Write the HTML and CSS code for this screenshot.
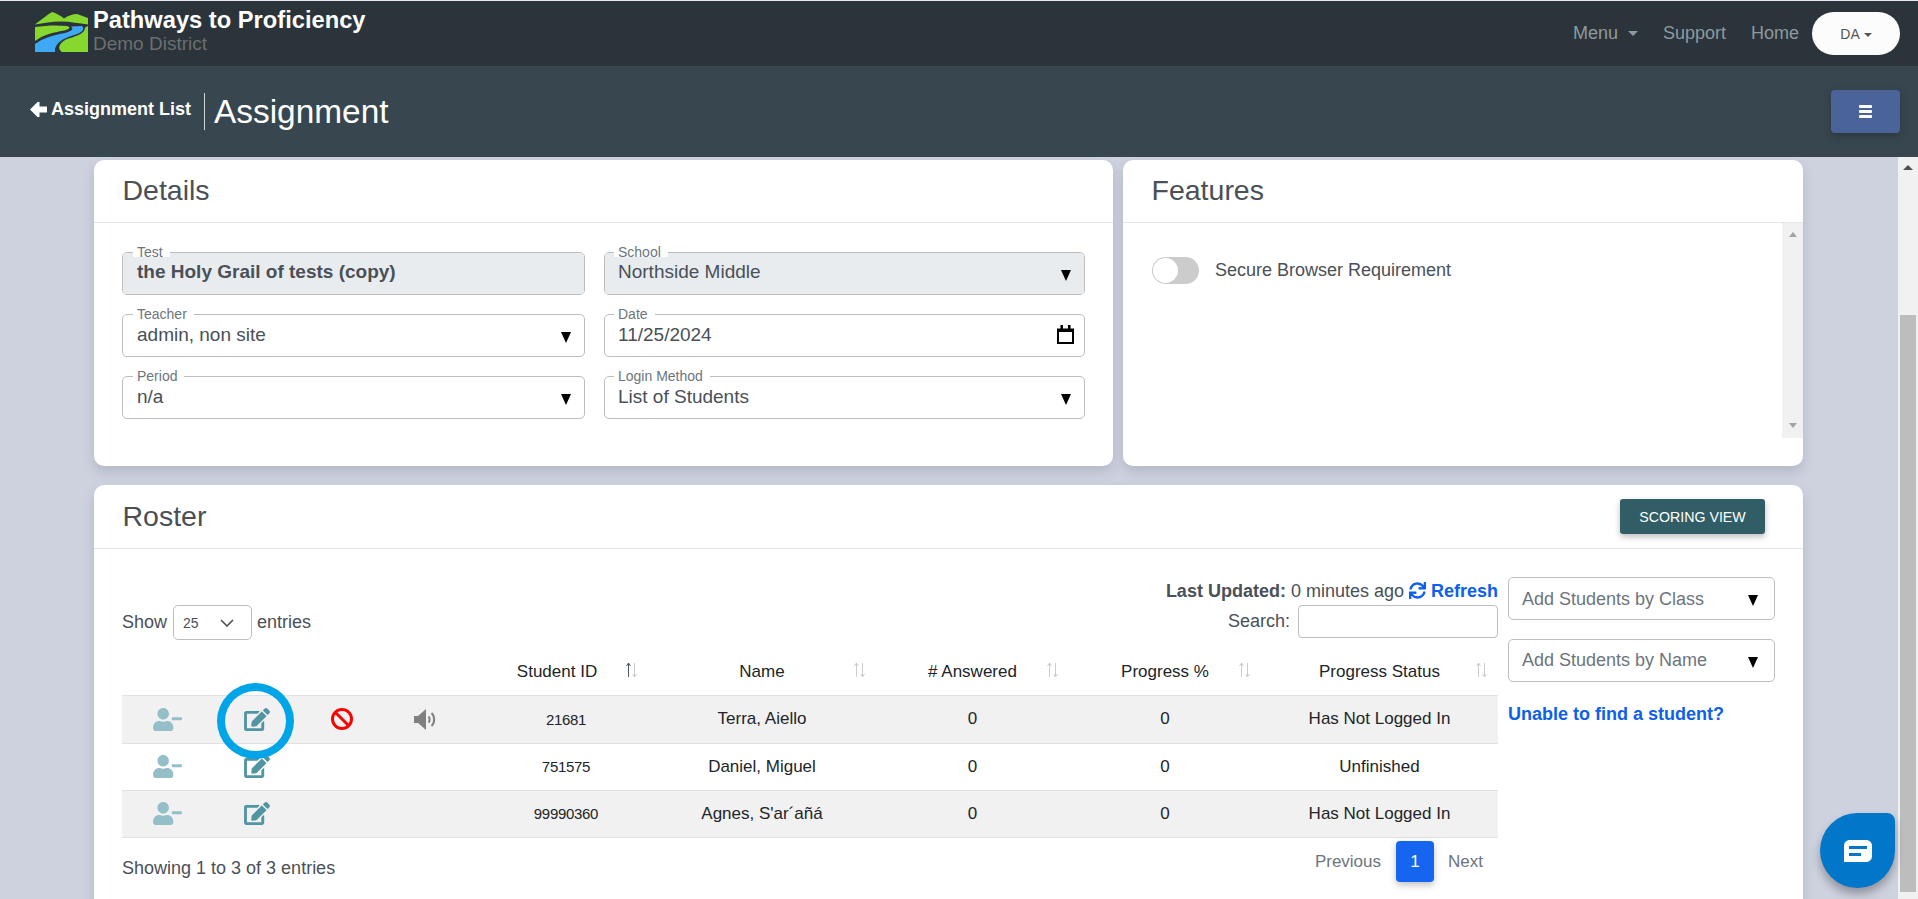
FILE: index.html
```html
<!DOCTYPE html>
<html lang="en">
<head>
<meta charset="utf-8">
<title>Assignment</title>
<link rel="stylesheet" href="styles.css">
</head>
<body>
<svg class="sprite" aria-hidden="true">
  <symbol id="i-edit" viewBox="0 0 576 512"><path d="M402.6 83.2l90.2 90.2c3.8 3.8 3.8 10 0 13.8L274.4 405.6l-92.8 10.3c-12.4 1.4-22.9-9.1-21.5-21.5l10.3-92.8L388.8 83.2c3.8-3.8 10-3.8 13.8 0zm162-22.9l-48.8-48.8c-15.2-15.2-39.9-15.2-55.2 0l-35.4 35.4c-3.8 3.8-3.8 10 0 13.8l90.2 90.2c3.8 3.8 10 3.8 13.8 0l35.4-35.4c15.2-15.3 15.2-40 0-55.2zM384 346.2V448H64V128h229.8c3.2 0 6.2-1.3 8.5-3.5l40-40c7.6-7.6 2.2-20.5-8.5-20.5H48C21.5 64 0 85.5 0 112v352c0 26.5 21.5 48 48 48h352c26.5 0 48-21.5 48-48V306.2c0-10.7-12.9-16-20.5-8.5l-40 40c-2.2 2.3-3.5 5.3-3.5 8.5z"/></symbol>
  <symbol id="i-user" viewBox="0 0 640 512"><path d="M624 208H432c-8.8 0-16 7.2-16 16v32c0 8.8 7.2 16 16 16h192c8.8 0 16-7.2 16-16v-32c0-8.8-7.2-16-16-16zm-400 48c70.7 0 128-57.3 128-128S294.7 0 224 0 96 57.3 96 128s57.3 128 128 128zm89.6 32h-16.7c-22.2 10.2-46.9 16-72.9 16s-50.6-5.8-72.9-16h-16.7C60.2 288 0 348.2 0 422.4V464c0 26.5 21.5 48 48 48h352c26.5 0 48-21.5 48-48v-41.6c0-74.2-60.2-134.4-134.4-134.4z"/></symbol>
  <symbol id="i-sort" viewBox="0 0 13 16"><path class="sort-up" d="M3.5 15V1M1.5 4L3.5 1L5.5 4"/><path class="sort-down" d="M9.5 1V15M7.5 12L9.5 15L11.5 12"/></symbol>
</svg>

<header class="topbar">
  <div class="brand">
    <svg class="logo" viewBox="0 0 53 40" aria-hidden="true">
      <path class="logo-green" d="M0 12.5C6 8 12 3 17 0C21 1 26 4 29 6.500C33 3.500 38 2 42 2L53 6V12.500C44 11.500 36 9.500 26 9.500C17 9.500 8 11 0 12.500Z"/>
      <path class="logo-green" d="M0 15C10 13.500 22 13 32 14C36 15 35 17 29 18.500C18 20.500 8 23 0 29Z"/>
      <path class="logo-green" d="M53 14V40H27C22 37 24 31 31 27.500C38 24.500 50 23 50 15.500Z"/>
      <path class="logo-blue" d="M0 40V32C8 26 19 23 30 21C37 19 39 17 36 14.500L47 14C50 17 48 20.500 39 23C29 26 19 31 20 40Z"/>
    </svg>
    <div class="brand-text">
      <div class="brand-name">Pathways to Proficiency</div>
      <div class="brand-sub">Demo District</div>
    </div>
  </div>
  <nav class="topnav">
    <a class="nav-link nav-menu">Menu<span class="caret caret-nav"></span></a>
    <a class="nav-link">Support</a>
    <a class="nav-link">Home</a>
    <button class="user-btn">DA<span class="caret caret-user"></span></button>
  </nav>
</header>

<section class="subbar">
  <a class="back-link">
    <svg class="back-arrow" viewBox="0 0 17 15" aria-hidden="true"><path d="M0 7.500L7.500 0H9.500V4.500H17V10.500H9.500V15H7.500Z"/></svg>
    Assignment List
  </a>
  <h1 class="page-title">Assignment</h1>
  <button class="hamburger" aria-label="Menu">
    <span class="hamburger-bar"></span><span class="hamburger-bar"></span><span class="hamburger-bar"></span>
  </button>
</section>

<div class="content">
  <main class="main">
    <section class="card">
      <h2 class="card-head">Details</h2>
      <div class="details-grid">
        <div class="field field-disabled"><span class="field-label">Test</span><span class="field-value value-bold">the Holy Grail of tests (copy)</span></div>
        <div class="field field-disabled"><span class="field-label">School</span><span class="field-value">Northside Middle</span><span class="drop"></span></div>
        <div class="field"><span class="field-label">Teacher</span><span class="field-value">admin, non site</span><span class="drop"></span></div>
        <div class="field"><span class="field-label">Date</span><span class="field-value">11/25/2024</span>
          <svg class="calendar" viewBox="0 0 17 19" aria-hidden="true"><path d="M1 4.500H16V18H1Z M1 5.500H16" fill="none" stroke="#000" stroke-width="2"/><path d="M3.500 0H6V4H3.500ZM11 0H13.500V4H11Z M1 4H16V7H1Z"/></svg>
        </div>
        <div class="field"><span class="field-label">Period</span><span class="field-value">n/a</span><span class="drop"></span></div>
        <div class="field"><span class="field-label">Login Method</span><span class="field-value">List of Students</span><span class="drop"></span></div>
      </div>
    </section>

    <section class="card">
      <h2 class="card-head">Features</h2>
      <div class="features-body">
        <div class="features-list">
          <span class="toggle"><span class="toggle-knob"></span></span>
          <span class="toggle-text">Secure Browser Requirement</span>
        </div>
        <div class="inner-scroll"><span class="tri-up"></span><span class="tri-down"></span></div>
      </div>
    </section>

    <section class="card roster">
      <div class="card-head roster-head">
        <h2 class="roster-title">Roster</h2>
        <button class="scoring-btn">SCORING VIEW</button>
      </div>
      <div class="roster-body">
        <div class="roster-left">
          <div class="updated"><b>Last Updated:</b> 0 minutes ago
            <a class="refresh"><svg class="refresh-icon" viewBox="0 0 512 512" aria-hidden="true"><path d="M440.65 12.57l4 82.77A247.16 247.16 0 0 0 255.83 8C134.73 8 33.91 94.92 12.29 209.82A12 12 0 0 0 24.09 224h49.05a12 12 0 0 0 11.67-9.26 175.91 175.91 0 0 1 317-56.94l-101.46-4.86a12 12 0 0 0-12.57 12v47.41a12 12 0 0 0 12 12H500a12 12 0 0 0 12-12V12a12 12 0 0 0-12-12h-47.37a12 12 0 0 0-11.98 12.57zM255.83 432a175.61 175.61 0 0 1-146-77.8l101.8 4.87a12 12 0 0 0 12.57-12v-47.4a12 12 0 0 0-12-12H12a12 12 0 0 0-12 12V500a12 12 0 0 0 12 12h47.35a12 12 0 0 0 12-12.6l-4.15-82.57A247.17 247.17 0 0 0 255.83 504c121.11 0 221.93-86.92 243.55-201.82a12 12 0 0 0-11.8-14.18h-49.05a12 12 0 0 0-11.67 9.26A175.86 175.86 0 0 1 255.83 432z"/></svg> Refresh</a>
          </div>
          <div class="tools">
            <div class="show">Show
              <span class="show-select">25<svg class="chevron" viewBox="0 0 14 8" aria-hidden="true"><path d="M1 1L7 7L13 1"/></svg></span>
              entries
            </div>
            <div class="search">Search:<span class="search-input"></span></div>
          </div>
          <table class="roster-table">
            <colgroup>
              <col class="c-user"><col class="c-edit"><col class="c-ban"><col class="c-vol">
              <col class="c-id"><col class="c-name"><col class="c-ans"><col class="c-pct"><col class="c-status">
            </colgroup>
            <thead>
              <tr>
                <th></th><th></th><th></th><th></th>
                <th class="th-id">Student ID<svg class="sort sort-active"><use href="#i-sort"/></svg></th>
                <th>Name<svg class="sort"><use href="#i-sort"/></svg></th>
                <th># Answered<svg class="sort"><use href="#i-sort"/></svg></th>
                <th>Progress %<svg class="sort"><use href="#i-sort"/></svg></th>
                <th>Progress Status<svg class="sort"><use href="#i-sort"/></svg></th>
              </tr>
            </thead>
            <tbody>
              <tr class="row-odd">
                <td><svg class="ico-user"><use href="#i-user"/></svg></td>
                <td><svg class="ico-edit"><use href="#i-edit"/></svg></td>
                <td><svg class="ico-ban" viewBox="0 0 22 22" aria-hidden="true"><circle cx="11" cy="11" r="9.500"/><path d="M4.500 4.500L17.500 17.500"/></svg></td>
                <td class="td-vol"><svg class="ico-vol" viewBox="0 0 22 21" aria-hidden="true"><path class="vol-cone" d="M0 7H4L12 0V21L4 14H0Z"/><path class="vol-wave" d="M14.500 7.500C16 9 16 12 14.500 13.500M17.500 4C21 7 21 14 17.500 17"/></svg></td>
                <td class="td-id">21681</td><td>Terra, Aiello</td><td>0</td><td>0</td><td>Has Not Logged In</td>
              </tr>
              <tr>
                <td><svg class="ico-user"><use href="#i-user"/></svg></td>
                <td><svg class="ico-edit"><use href="#i-edit"/></svg></td>
                <td></td><td></td>
                <td class="td-id">751575</td><td>Daniel, Miguel</td><td>0</td><td>0</td><td>Unfinished</td>
              </tr>
              <tr class="row-odd">
                <td><svg class="ico-user"><use href="#i-user"/></svg></td>
                <td><svg class="ico-edit"><use href="#i-edit"/></svg></td>
                <td></td><td></td>
                <td class="td-id">99990360</td><td>Agnes, S'ar´añá</td><td>0</td><td>0</td><td>Has Not Logged In</td>
              </tr>
            </tbody>
          </table>
          <div class="table-foot">
            <div class="showing">Showing 1 to 3 of 3 entries</div>
            <div class="pager"><a class="page-link">Previous</a><a class="page-current">1</a><a class="page-link">Next</a></div>
          </div>
        </div>
        <aside class="roster-right">
          <div class="add-select"><span class="add-text">Add Students by Class</span><span class="drop"></span></div>
          <div class="add-select"><span class="add-text">Add Students by Name</span><span class="drop"></span></div>
          <a class="unable">Unable to find a student?</a>
        </aside>
      </div>
    </section>
  </main>
  <div class="page-scroll"><span class="page-scroll-up"></span><span class="page-scroll-thumb"></span></div>
</div>

<div class="highlight-circle"></div>
<button class="chat-btn" aria-label="Chat">
  <svg class="chat-icon" viewBox="0 0 28 22" aria-hidden="true"><path d="M6 0H22C25.500 0 28 2.500 28 6V16C28 19.500 25.500 22 22 22H0V6C0 2.500 2.500 0 6 0Z" fill="#fff"/><path d="M5 7.500H23M5 14.500H17" stroke="#0277c9" stroke-width="3"/></svg>
</button>
</body>
</html>
```

FILE: styles.css
```css
* { box-sizing: border-box; }
html, body { margin: 0; height: 100%; }
body {
  position: relative;
  height: 899px;
  overflow: hidden;
  display: flex;
  flex-direction: column;
  background: #ced2df;
  color: #495057;
  font-family: "Liberation Sans", Arial, sans-serif;
  font-size: 18px;
}
.sprite { display: none; }
button { font-family: inherit; border: 0; padding: 0; }

/* top bar */
.topbar {
  flex: none;
  height: 66px;
  border-top: 1px solid #e8e6ee;
  background: #2a343a;
  display: flex;
  align-items: center;
  justify-content: space-between;
  padding: 0 18px 0 35px;
}
.brand { display: flex; align-items: flex-start; gap: 5px; margin-top: -1px; }
.logo { width: 53px; height: 40px; }
.logo-green { fill: #86d72e; }
.logo-blue { fill: #3fa9f5; }
.brand-text { margin-top: -5px; }
.brand-name { color: #fff; font-weight: 700; font-size: 23.700px; line-height: 26px; }
.brand-sub { color: #6e6e6e; font-size: 19px; line-height: 22px; }
.topnav { display: flex; align-items: center; }
.nav-link { color: #8d9a9f; font-size: 18px; margin-right: 25px; }
.nav-menu { display: flex; align-items: center; }
.nav-link:nth-child(3) { margin-right: 13px; }
.caret {
  display: inline-block;
  width: 0;
  height: 0;
  border-left: 5px solid transparent;
  border-right: 5px solid transparent;
  border-top: 5px solid #8d9a9f;
}
.caret-nav { margin-left: 10px; }
.caret-user { margin-left: 4px; border-left-width: 4px; border-right-width: 4px; border-top: 4px solid #555; vertical-align: 2px; }
.user-btn {
  width: 88px;
  height: 43px;
  border-radius: 22px;
  background: #fcfcfc;
  color: #555;
  font-size: 14px;
}

/* sub bar */
.subbar {
  flex: none;
  height: 91px;
  background: #38474f;
  display: flex;
  align-items: center;
  padding: 0 18px 0 30px;
  color: #fff;
}
.back-link {
  display: flex;
  align-items: center;
  gap: 4px;
  font-weight: 700;
  font-size: 18px;
  padding-right: 13px;
  margin-bottom: 6px;
  margin-top: 1px;
}
.back-arrow { width: 17px; height: 15px; fill: #fff; }
.page-title {
  margin: 0;
  font-size: 33.400px;
  font-weight: 400;
  line-height: 37px;
  border-left: 1px solid #cfd4d8;
  padding-left: 9px;
  flex: 1;
}
.hamburger {
  width: 69px;
  height: 43px;
  border-radius: 4px;
  background: #4a6398;
  box-shadow: 0 3px 8px rgba(0, 0, 0, .25);
  display: flex;
  flex-direction: column;
  align-items: center;
  justify-content: center;
  gap: 2px;
}
.hamburger-bar { width: 13px; height: 3px; background: #fff; border-radius: 1px; }

/* layout */
.content { flex: 1; min-height: 0; display: flex; }
.main {
  flex: 1;
  min-width: 0;
  overflow: hidden;
  display: grid;
  grid-template-columns: 1019px 680px;
  grid-template-rows: 306px 500px;
  gap: 19px 10px;
  padding: 3px 0 0 94px;
}
.page-scroll {
  flex: none;
  width: 20px;
  background: #f1f1f1;
  display: flex;
  flex-direction: column;
  align-items: center;
  padding-top: 8px;
}
.page-scroll-up {
  width: 0;
  height: 0;
  border-left: 5px solid transparent;
  border-right: 5px solid transparent;
  border-bottom: 5px solid #505050;
  margin-bottom: 145px;
}
.page-scroll-thumb { width: 16px; height: 577px; background: #bdbdbd; }

/* cards */
.card {
  background: #fff;
  border-radius: 10px;
  box-shadow: 0 6px 12px rgba(60, 70, 100, .18);
}
.card-head {
  margin: 0;
  height: 63px;
  padding-left: 28.500px;
  border-bottom: 1px solid #e3e6ea;
  font-size: 28.500px;
  font-weight: 400;
  line-height: 61px;
  color: #495057;
}
.details-grid {
  display: grid;
  grid-template-columns: 463px 481px;
  grid-auto-rows: 43px;
  gap: 19px;
  padding: 29px 0 0 28px;
}
.field {
  position: relative;
  display: flex;
  align-items: center;
  border: 1px solid #bdbdbd;
  border-radius: 5px;
  padding: 0 13px;
}
.field:nth-child(odd) { padding-left: 14px; }
.field-disabled { background: #fff; }
.field-disabled::after {
  content: "";
  position: absolute;
  inset: 4px 0 0;
  border-radius: 0 0 4px 4px;
  background: #e9ecef;
}
.field-disabled::before {
  content: "";
  position: absolute;
  inset: 0;
  border-radius: 4px;
  background: #e9ecef;
}
.field-label {
  position: absolute;
  top: -7px;
  left: 9px;
  padding: 0 7px 0 4px;
  background: #fff;
  color: #6c757d;
  font-size: 14px;
  line-height: 12px;
  height: 12px;
}
.field:nth-child(odd) .field-label { left: 10px; }
.field-value { position: relative; z-index: 1; flex: 1; margin-top: -2px; color: #495057; font-size: 19px; }
.field-disabled .field-value { margin-top: -3px; }
.value-bold { font-weight: 700; }
.drop {
  position: relative;
  z-index: 1;
  flex: none;
  width: 0;
  height: 0;
  margin-top: 3px;
  border-left: 5.500px solid transparent;
  border-right: 5.500px solid transparent;
  border-top: 11px solid #000;
}
.calendar { flex: none; width: 17px; height: 19px; margin-right: -3px; margin-top: -2px; }

/* features */
.features-body { display: flex; height: 215px; }
.features-list { flex: 1; display: flex; align-items: flex-start; gap: 16px; padding: 34px 0 0 29px; }
.toggle {
  width: 47px;
  height: 27px;
  border-radius: 14px;
  background: #ccc;
  display: flex;
  align-items: center;
  padding-left: 1px;
}
.toggle-knob { width: 25px; height: 25px; border-radius: 50%; background: #fff; }
.toggle-text { line-height: 27px; color: #495057; }
.inner-scroll {
  width: 21px;
  background: #f1f1f1;
  display: flex;
  flex-direction: column;
  align-items: center;
  justify-content: space-between;
  padding: 9px 0 10px;
}
.tri-up, .tri-down { width: 0; height: 0; border-left: 4.500px solid transparent; border-right: 4.500px solid transparent; }
.tri-up { border-bottom: 5px solid #a3a3a3; }
.tri-down { border-top: 5px solid #a3a3a3; }

/* roster */
.roster { grid-column: 1 / 3; }
.roster-head { height: 64px; display: flex; align-items: center; justify-content: space-between; padding-right: 38px; }
.roster-title { margin: 0; font-size: 28.500px; font-weight: 400; }
.scoring-btn {
  width: 145px;
  height: 35px;
  border-radius: 3px;
  background: #315d66;
  color: #fff;
  font-size: 14.200px;
  box-shadow: 0 3px 6px rgba(0, 0, 0, .25);
}
.roster-body {
  display: grid;
  grid-template-columns: 1376px 267px;
  gap: 10px;
  padding: 28px 28px 0;
}
.updated { height: 28px; line-height: 28px; text-align: right; }
.refresh { color: #0d5fef; font-weight: 700; }
.refresh-icon { width: 17px; height: 17px; fill: #0d5fef; vertical-align: -2px; }
.tools { display: flex; justify-content: space-between; height: 35px; margin-bottom: 8px; }
.show { display: flex; align-items: center; gap: 6px; height: 35px; }
.show-select {
  width: 79px;
  height: 35px;
  margin-right: -1px;
  border: 1px solid #bdbdbd;
  border-radius: 5px;
  display: flex;
  align-items: center;
  justify-content: space-between;
  padding: 0 17px 0 9px;
  font-size: 14px;
}
.chevron { width: 14px; height: 8px; fill: none; stroke: #495057; stroke-width: 1.600; }
.search { display: flex; align-items: flex-start; gap: 8px; line-height: 33px; }
.search-input { width: 200px; height: 33px; border: 1px solid #bdbdbd; border-radius: 4px; }

.roster-table { width: 1376px; table-layout: fixed; border-collapse: collapse; color: #212529; font-size: 17px; text-align: center; }
.c-user { width: 92px; }
.c-edit { width: 80px; }
.c-ban { width: 96px; }
.c-vol { width: 94px; }
.c-id { width: 164px; }
.c-name { width: 228px; }
.c-ans { width: 193px; }
.c-pct { width: 192px; }
.c-status { width: 237px; }
.roster-table th { position: relative; height: 47px; padding: 1px 0 0; font-weight: 400; border-bottom: 1px solid #dee2e6; }
.th-id.th-id { padding-right: 18px; }
.sort {
  position: absolute;
  right: 10px;
  top: 14px;
  width: 13px;
  height: 16px;
  fill: none;
  stroke-width: 1;
}
.sort-up { stroke: var(--sort-up, #ccc); }
.sort-down { stroke: #ccc; }
.sort-active { --sort-up: #4f5b63; }
.roster-table td { height: 47px; padding: 0; border-bottom: 1px solid #dee2e6; }
.roster-table tbody tr:first-child td { height: 48px; }
.roster-table .td-id { font-size: 15px; letter-spacing: -.3px; }
.row-odd { background: #f1f1f1; }
.roster-table td svg { display: block; margin: 0 auto; }
.ico-user { width: 29px; height: 23px; fill: #95bfc8; transform: translateX(-1px); }
.ico-edit { width: 26px; height: 23px; fill: #5295a2; transform: translateX(3px); }
.ico-ban { width: 22px; height: 22px; fill: none; stroke: #f00; stroke-width: 3; }
.ico-vol { width: 22px; height: 21px; }
.vol-cone { fill: #808080; }
.vol-wave { fill: none; stroke: #808080; stroke-width: 2; }
.roster-table .td-vol svg { transform: translateX(-12px); }
.table-foot { display: flex; justify-content: space-between; align-items: flex-start; margin-top: 3px; }
.showing { padding-top: 14px; line-height: 27px; }
.pager { display: flex; align-items: center; height: 41px; font-size: 17px; padding-right: 15px; }
.page-link { color: #6c757d; margin-top: 2px; }
.page-current {
  width: 38px;
  height: 41px;
  margin: 0 14px 0 15px;
  padding-top: 2px;
  border-radius: 4px;
  background: #1565f0;
  color: #fff;
  display: flex;
  align-items: center;
  justify-content: center;
  box-shadow: 0 3px 7px rgba(0, 0, 0, .25);
}
.roster-right { display: flex; flex-direction: column; gap: 19px; }
.add-select {
  height: 43px;
  border: 1px solid #bdbdbd;
  border-radius: 5px;
  display: flex;
  align-items: center;
  justify-content: space-between;
  padding: 0 16px 0 13px;
}
.add-select:first-child { padding-top: 1px; }
.add-text { color: #6c757d; }
.unable { color: #0d5fef; font-weight: 700; line-height: 27px; }

/* overlays */
.highlight-circle {
  position: absolute;
  left: 217px;
  top: 683px;
  width: 77px;
  height: 76px;
  border: 8px solid #00a5e8;
  border-radius: 50%;
}
.chat-btn {
  position: absolute;
  left: 1820px;
  top: 813px;
  width: 75px;
  height: 75px;
  border-radius: 50% 8px 50% 50%;
  background: #0277c9;
  box-shadow: 0 6px 10px rgba(0, 0, 0, .3);
  display: flex;
  align-items: center;
  justify-content: center;
}
.chat-icon { width: 28px; height: 22px; }
```
